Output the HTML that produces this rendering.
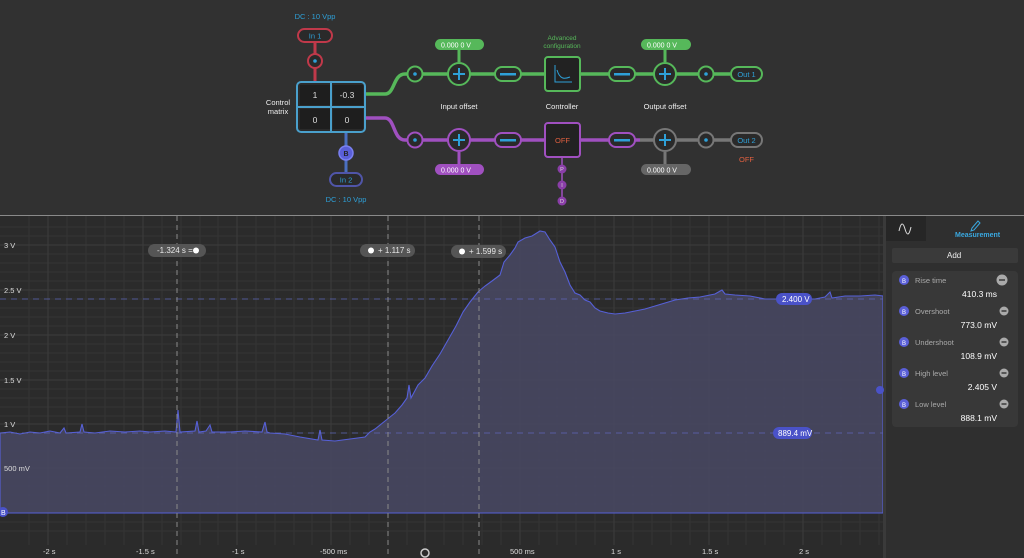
<!DOCTYPE html>
<html><head><meta charset="utf-8"><style>
body{margin:0;width:1024px;height:558px;background:#2f2f2f;overflow:hidden;font-family:"Liberation Sans",sans-serif;position:relative}
</style></head><body>
<svg width="1024" height="558" style="position:absolute;left:0;top:0" font-family="Liberation Sans, sans-serif">
<rect x="0" y="0" width="1024" height="215" fill="#313131"/>
<rect x="0" y="216" width="886" height="342" fill="#2b2b2b"/>
<rect x="886" y="216" width="138" height="342" fill="#2f2f2f"/>
<line x1="0" y1="215.5" x2="1024" y2="215.5" stroke="#8a8a8a" stroke-width="1"/>
<g stroke="#343434" stroke-width="1">
<path d="M29 216V545M48 216V545M67 216V545M86 216V545M105 216V545M124 216V545M143 216V545M162 216V545M181 216V545M200 216V545M218 216V545M237 216V545M256 216V545M275 216V545M294 216V545M312 216V545M331 216V545M350 216V545M369 216V545M388 216V545M407 216V545M425 216V545M444 216V545M463 216V545M482 216V545M501 216V545M520 216V545M539 216V545M557 216V545M576 216V545M595 216V545M614 216V545M633 216V545M652 216V545M671 216V545M690 216V545M709 216V545M728 216V545M746 216V545M765 216V545M784 216V545M803 216V545M822 216V545M841 216V545M860 216V545M879 216V545"/>
<path d="M0 227H883M0 236H883M0 245H883M0 254H883M0 263H883M0 272H883M0 281H883M0 290H883M0 299H883M0 308H883M0 317H883M0 326H883M0 335H883M0 344H883M0 353H883M0 362H883M0 371H883M0 380H883M0 389H883M0 398H883M0 407H883M0 416H883M0 424H883M0 433H883M0 442H883M0 451H883M0 460H883M0 468H883M0 477H883M0 486H883M0 495H883M0 504H883M0 513H883M0 522H883M0 531H883"/>
</g>
<g stroke="#3d3d3d" stroke-width="1">
<path d="M48 216V545M143 216V545M237 216V545M331 216V545M425 216V545M520 216V545M614 216V545M709 216V545M803 216V545"/>
<path d="M0 245H883M0 290H883M0 335H883M0 380H883M0 424H883M0 468H883M0 513H883"/>
</g>
<path fill="#464760" fill-opacity="0.92" stroke="#5660d8" stroke-width="1.1" d="M0 433L10 432L20 434L30 432L40 433L50 431L60 433L64 428L66 433L80 432L82 424L84 432L95 433L110 431L125 432L140 431L150 432L165 431L176 432L178 410L180 432L195 431L197 421L199 432L206 431L210 425L212 432L230 432L245 431L262 432L265 422L267 432L270 433L285 434L300 437L318 440L320 430L322 440L335 441L350 439L365 437L370 432L375 429L385 421L395 413L402 405L407 398L409 385L411 398L418 385L425 378L432 366L440 354L448 340L456 326L463 312L470 302L478 292L485 286L492 281L500 275L504 262L510 255L515 248L518 242L525 238L532 236L540 231L545 232L550 240L555 247L560 262L565 272L570 285L575 293L580 295L585 300L590 302L595 308L600 311L608 313L615 314L625 313L635 311L645 309L655 306L665 303L675 300L688 298L700 297L715 294L722 290L725 294L735 295L750 296L765 299L780 299L800 299L815 299L825 297L830 292L832 298L845 296L860 296L875 295L883 296L883 513L0 513Z"/>
<line x1="0" y1="299" x2="883" y2="299" stroke="#6068c0" stroke-dasharray="6 5" stroke-opacity="0.7"/>
<line x1="0" y1="433" x2="883" y2="433" stroke="#6068c0" stroke-dasharray="6 5" stroke-opacity="0.7"/>
<g stroke="#8a8a8a" stroke-dasharray="5 4"><line x1="177" y1="216" x2="177" y2="558"/><line x1="388" y1="216" x2="388" y2="558"/><line x1="479" y1="216" x2="479" y2="558"/></g>
<rect x="883" y="216" width="3" height="342" fill="#3a3a3a"/>
<g font-size="8" fill="#e8e8e8">
<rect x="148" y="244" width="58" height="13" rx="6.5" fill="#555"/><text x="157" y="253">-1.324 s =</text><circle cx="196" cy="250.5" r="3" fill="#fff"/>
<rect x="360" y="244" width="55" height="13" rx="6.5" fill="#555"/><circle cx="371" cy="250.5" r="3" fill="#fff"/><text x="378" y="253">+ 1.117 s</text>
<rect x="451" y="245" width="55" height="13" rx="6.5" fill="#555"/><circle cx="462" cy="251.5" r="3" fill="#fff"/><text x="469" y="254">+ 1.599 s</text>
<rect x="776" y="293" width="36" height="12" rx="6" fill="#4a52c8"/><text x="782" y="302" fill="#fff">2.400 V</text>
<rect x="773" y="427" width="39" height="12" rx="6" fill="#4a52c8"/><text x="778" y="436" fill="#fff">889.4 mV</text>
</g>
<circle cx="3" cy="512" r="5" fill="#4a52c8"/><text x="1" y="515" font-size="7" fill="#fff">B</text>
<circle cx="880" cy="390" r="4" fill="#4a52c8"/>
<g font-size="7.5" fill="#ddd"><text x="4" y="248">3 V</text><text x="4" y="293">2.5 V</text><text x="4" y="338">2 V</text><text x="4" y="383">1.5 V</text><text x="4" y="427">1 V</text><text x="4" y="471">500 mV</text>
<text x="43" y="554">-2 s</text><text x="136" y="554">-1.5 s</text><text x="232" y="554">-1 s</text><text x="320" y="554">-500 ms</text><text x="510" y="554">500 ms</text><text x="611" y="554">1 s</text><text x="702" y="554">1.5 s</text><text x="799" y="554">2 s</text></g>
<circle cx="425" cy="553" r="4" fill="none" stroke="#ccc" stroke-width="1.5"/>
<rect x="886" y="216" width="40" height="25" fill="#262626"/>
<path d="M899 231c2-9 4-9 6-2s4 7 6-2" fill="none" stroke="#ddd" stroke-width="1"/>
<path d="M972 228l6-7 2 2-6 7-3 1z" fill="none" stroke="#3aa8e0" stroke-width="1"/>
<text x="955" y="237" font-size="7" font-weight="bold" fill="#3aa8e0">Measurement</text>
<rect x="892" y="248" width="126" height="15" rx="2" fill="#3a3a3a"/><text x="947" y="258" font-size="8" fill="#eee">Add</text>
<rect x="892" y="271" width="126" height="156" rx="4" fill="#383838"/>
<g font-size="7.5">
<g><circle cx="904" cy="280" r="5" fill="#5a5fd8"/><text x="902" y="283" font-size="6" fill="#fff">B</text><text x="915" y="283" fill="#aaa">Rise time</text><circle cx="1002" cy="280" r="5.5" fill="#aaa"/><rect x="999" y="279.3" width="6" height="1.4" fill="#333"/><text x="997" y="297" text-anchor="end" fill="#fff" font-size="8.5">410.3 ms</text></g>
<g><circle cx="904" cy="311" r="5" fill="#5a5fd8"/><text x="902" y="314" font-size="6" fill="#fff">B</text><text x="915" y="314" fill="#aaa">Overshoot</text><circle cx="1004" cy="311" r="4.5" fill="#aaa"/><rect x="1001.5" y="310.3" width="5" height="1.4" fill="#333"/><text x="997" y="328" text-anchor="end" fill="#fff" font-size="8.5">773.0 mV</text></g>
<g><circle cx="904" cy="342" r="5" fill="#5a5fd8"/><text x="902" y="345" font-size="6" fill="#fff">B</text><text x="915" y="345" fill="#aaa">Undershoot</text><circle cx="1004" cy="342" r="4.5" fill="#aaa"/><rect x="1001.5" y="341.3" width="5" height="1.4" fill="#333"/><text x="997" y="359" text-anchor="end" fill="#fff" font-size="8.5">108.9 mV</text></g>
<g><circle cx="904" cy="373" r="5" fill="#5a5fd8"/><text x="902" y="376" font-size="6" fill="#fff">B</text><text x="915" y="376" fill="#aaa">High level</text><circle cx="1004" cy="373" r="4.5" fill="#aaa"/><rect x="1001.5" y="372.3" width="5" height="1.4" fill="#333"/><text x="997" y="390" text-anchor="end" fill="#fff" font-size="8.5">2.405 V</text></g>
<g><circle cx="904" cy="404" r="5" fill="#5a5fd8"/><text x="902" y="407" font-size="6" fill="#fff">B</text><text x="915" y="407" fill="#aaa">Low level</text><circle cx="1004" cy="404" r="4.5" fill="#aaa"/><rect x="1001.5" y="403.3" width="5" height="1.4" fill="#333"/><text x="997" y="421" text-anchor="end" fill="#fff" font-size="8.5">888.1 mV</text></g>
</g>
<g font-size="7.5">
<text x="315" y="19" text-anchor="middle" fill="#2ea0d8">DC : 10 Vpp</text>
<line x1="315" y1="42" x2="315" y2="82" stroke="#c0394a" stroke-width="3"/>
<rect x="298" y="29" width="34" height="13" rx="6.5" fill="#2a2a2a" stroke="#c0394a" stroke-width="2"/><text x="315" y="38.5" text-anchor="middle" fill="#2ea0d8">In 1</text>
<circle cx="315" cy="61" r="7" fill="#2a2a2a" stroke="#c0394a" stroke-width="2"/><circle cx="315" cy="61" r="1.8" fill="#2ea0d8"/>
<line x1="346" y1="132" x2="346" y2="175" stroke="#4a6fc0" stroke-width="3"/>
<circle cx="346" cy="153" r="7" fill="#5a5fd8" stroke="#7a80f0" stroke-width="1.5"/><text x="346" y="156" text-anchor="middle" font-size="7" font-weight="bold" fill="#222">B</text>
<rect x="330" y="173" width="32" height="13" rx="6.5" fill="#2a2a2a" stroke="#5055a8" stroke-width="2"/><text x="346" y="182.5" text-anchor="middle" fill="#2ea0d8">In 2</text>
<text x="346" y="202" text-anchor="middle" fill="#2ea0d8">DC : 10 Vpp</text>
<text x="278" y="105" text-anchor="middle" fill="#eee">Control</text><text x="278" y="114" text-anchor="middle" fill="#eee">matrix</text>
<path d="M365 94H385C395 94 393 74 405 74H730" fill="none" stroke="#56b85a" stroke-width="3.5"/>
<path d="M365 118H385C395 118 393 140 405 140H640" fill="none" stroke="#a050c0" stroke-width="3.5"/>
<path d="M640 140H731" fill="none" stroke="#777" stroke-width="3.5"/>
<path d="M459 50V62M665 50V62" stroke="#56b85a" stroke-width="3"/>
<path d="M459 152V164" stroke="#a050c0" stroke-width="3"/><path d="M665 152V164" stroke="#777" stroke-width="3"/>
<path d="M562 157V200" stroke="#a050c0" stroke-width="1.5"/>
<rect x="297" y="82" width="68" height="50" rx="4" fill="#2a2a2a" stroke="#4aa0cc" stroke-width="2"/>
<rect x="300" y="85" width="30" height="20" fill="#1e1e1e"/><rect x="333" y="85" width="30" height="20" fill="#1e1e1e"/><rect x="300" y="109" width="30" height="20" fill="#1e1e1e"/><rect x="333" y="109" width="30" height="20" fill="#1e1e1e"/>
<path d="M331 83V131M298 107H364" stroke="#4aa0cc" stroke-width="2"/>
<g fill="#ddd" font-size="8.5" text-anchor="middle"><text x="315" y="98">1</text><text x="347" y="98">-0.3</text><text x="315" y="123">0</text><text x="347" y="123">0</text></g>
<circle cx="415" cy="74" r="7.5" fill="#2a2a2a" stroke="#56b85a" stroke-width="2"/><circle cx="415" cy="74" r="1.8" fill="#2ea0d8"/>
<circle cx="459" cy="74" r="11" fill="#2a2a2a" stroke="#56b85a" stroke-width="2"/><path d="M459 68V80M453 74H465" stroke="#2ea0d8" stroke-width="2"/>
<rect x="495" y="67" width="26" height="14" rx="7" fill="#2a2a2a" stroke="#56b85a" stroke-width="2"/><rect x="500" y="73" width="16" height="2.5" fill="#2ea0d8"/>
<rect x="545" y="57" width="35" height="34" rx="3" fill="#222" stroke="#56b85a" stroke-width="2"/><path d="M555 65V82H572M557 70C560 80 565 79 570 77" fill="none" stroke="#2ea0d8" stroke-width="1"/>
<rect x="609" y="67" width="26" height="14" rx="7" fill="#2a2a2a" stroke="#56b85a" stroke-width="2"/><rect x="614" y="73" width="16" height="2.5" fill="#2ea0d8"/>
<circle cx="665" cy="74" r="11" fill="#2a2a2a" stroke="#56b85a" stroke-width="2"/><path d="M665 68V80M659 74H671" stroke="#2ea0d8" stroke-width="2"/>
<circle cx="706" cy="74" r="7.5" fill="#2a2a2a" stroke="#56b85a" stroke-width="2"/><circle cx="706" cy="74" r="1.8" fill="#2ea0d8"/>
<rect x="731" y="67" width="31" height="14" rx="7" fill="#2a2a2a" stroke="#56b85a" stroke-width="2"/><text x="746.5" y="77" text-anchor="middle" fill="#2ea0d8">Out 1</text>
<rect x="435" y="39" width="49" height="11" rx="5.5" fill="#56b85a"/><text x="441" y="47.5" font-size="7" fill="#fff">0.000 0  V</text>
<rect x="641" y="39" width="50" height="11" rx="5.5" fill="#56b85a"/><text x="647" y="47.5" font-size="7" fill="#fff">0.000 0  V</text>
<text x="562" y="40" text-anchor="middle" font-size="6.5" fill="#56b85a">Advanced</text><text x="562" y="48" text-anchor="middle" font-size="6.5" fill="#56b85a">configuration</text>
<g fill="#eee" text-anchor="middle"><text x="459" y="109">Input offset</text><text x="562" y="109">Controller</text><text x="665" y="109">Output offset</text></g>
<circle cx="415" cy="140" r="7.5" fill="#2a2a2a" stroke="#a050c0" stroke-width="2"/><circle cx="415" cy="140" r="1.8" fill="#2ea0d8"/>
<circle cx="459" cy="140" r="11" fill="#2a2a2a" stroke="#a050c0" stroke-width="2"/><path d="M459 134V146M453 140H465" stroke="#2ea0d8" stroke-width="2"/>
<rect x="495" y="133" width="26" height="14" rx="7" fill="#2a2a2a" stroke="#a050c0" stroke-width="2"/><rect x="500" y="139" width="16" height="2.5" fill="#2ea0d8"/>
<rect x="545" y="123" width="35" height="34" rx="3" fill="#222" stroke="#a050c0" stroke-width="2"/><text x="562.5" y="143" text-anchor="middle" fill="#e06040">OFF</text>
<rect x="609" y="133" width="26" height="14" rx="7" fill="#2a2a2a" stroke="#a050c0" stroke-width="2"/><rect x="614" y="139" width="16" height="2.5" fill="#2ea0d8"/>
<circle cx="665" cy="140" r="11" fill="#2a2a2a" stroke="#777" stroke-width="2"/><path d="M665 134V146M659 140H671" stroke="#2ea0d8" stroke-width="2"/>
<circle cx="706" cy="140" r="7.5" fill="#2a2a2a" stroke="#777" stroke-width="2"/><circle cx="706" cy="140" r="1.8" fill="#2ea0d8"/>
<rect x="731" y="133" width="31" height="14" rx="7" fill="#2a2a2a" stroke="#777" stroke-width="2"/><text x="746.5" y="143" text-anchor="middle" fill="#2ea0d8">Out 2</text>
<text x="746.5" y="162" text-anchor="middle" fill="#e06040">OFF</text>
<rect x="435" y="164" width="49" height="11" rx="5.5" fill="#a050c0"/><text x="441" y="172.5" font-size="7" fill="#fff">0.000 0  V</text>
<rect x="641" y="164" width="50" height="11" rx="5.5" fill="#666"/><text x="647" y="172.5" font-size="7" fill="#fff">0.000 0  V</text>
<g font-size="5.5" fill="#ddd" text-anchor="middle"><circle cx="562" cy="169" r="4.5" fill="#8a3ea8"/><text x="562" y="171">P</text><circle cx="562" cy="185" r="4.5" fill="#8a3ea8"/><text x="562" y="187">I</text><circle cx="562" cy="201" r="4.5" fill="#8a3ea8"/><text x="562" y="203">D</text></g>
</g>
</svg>
</body></html>
